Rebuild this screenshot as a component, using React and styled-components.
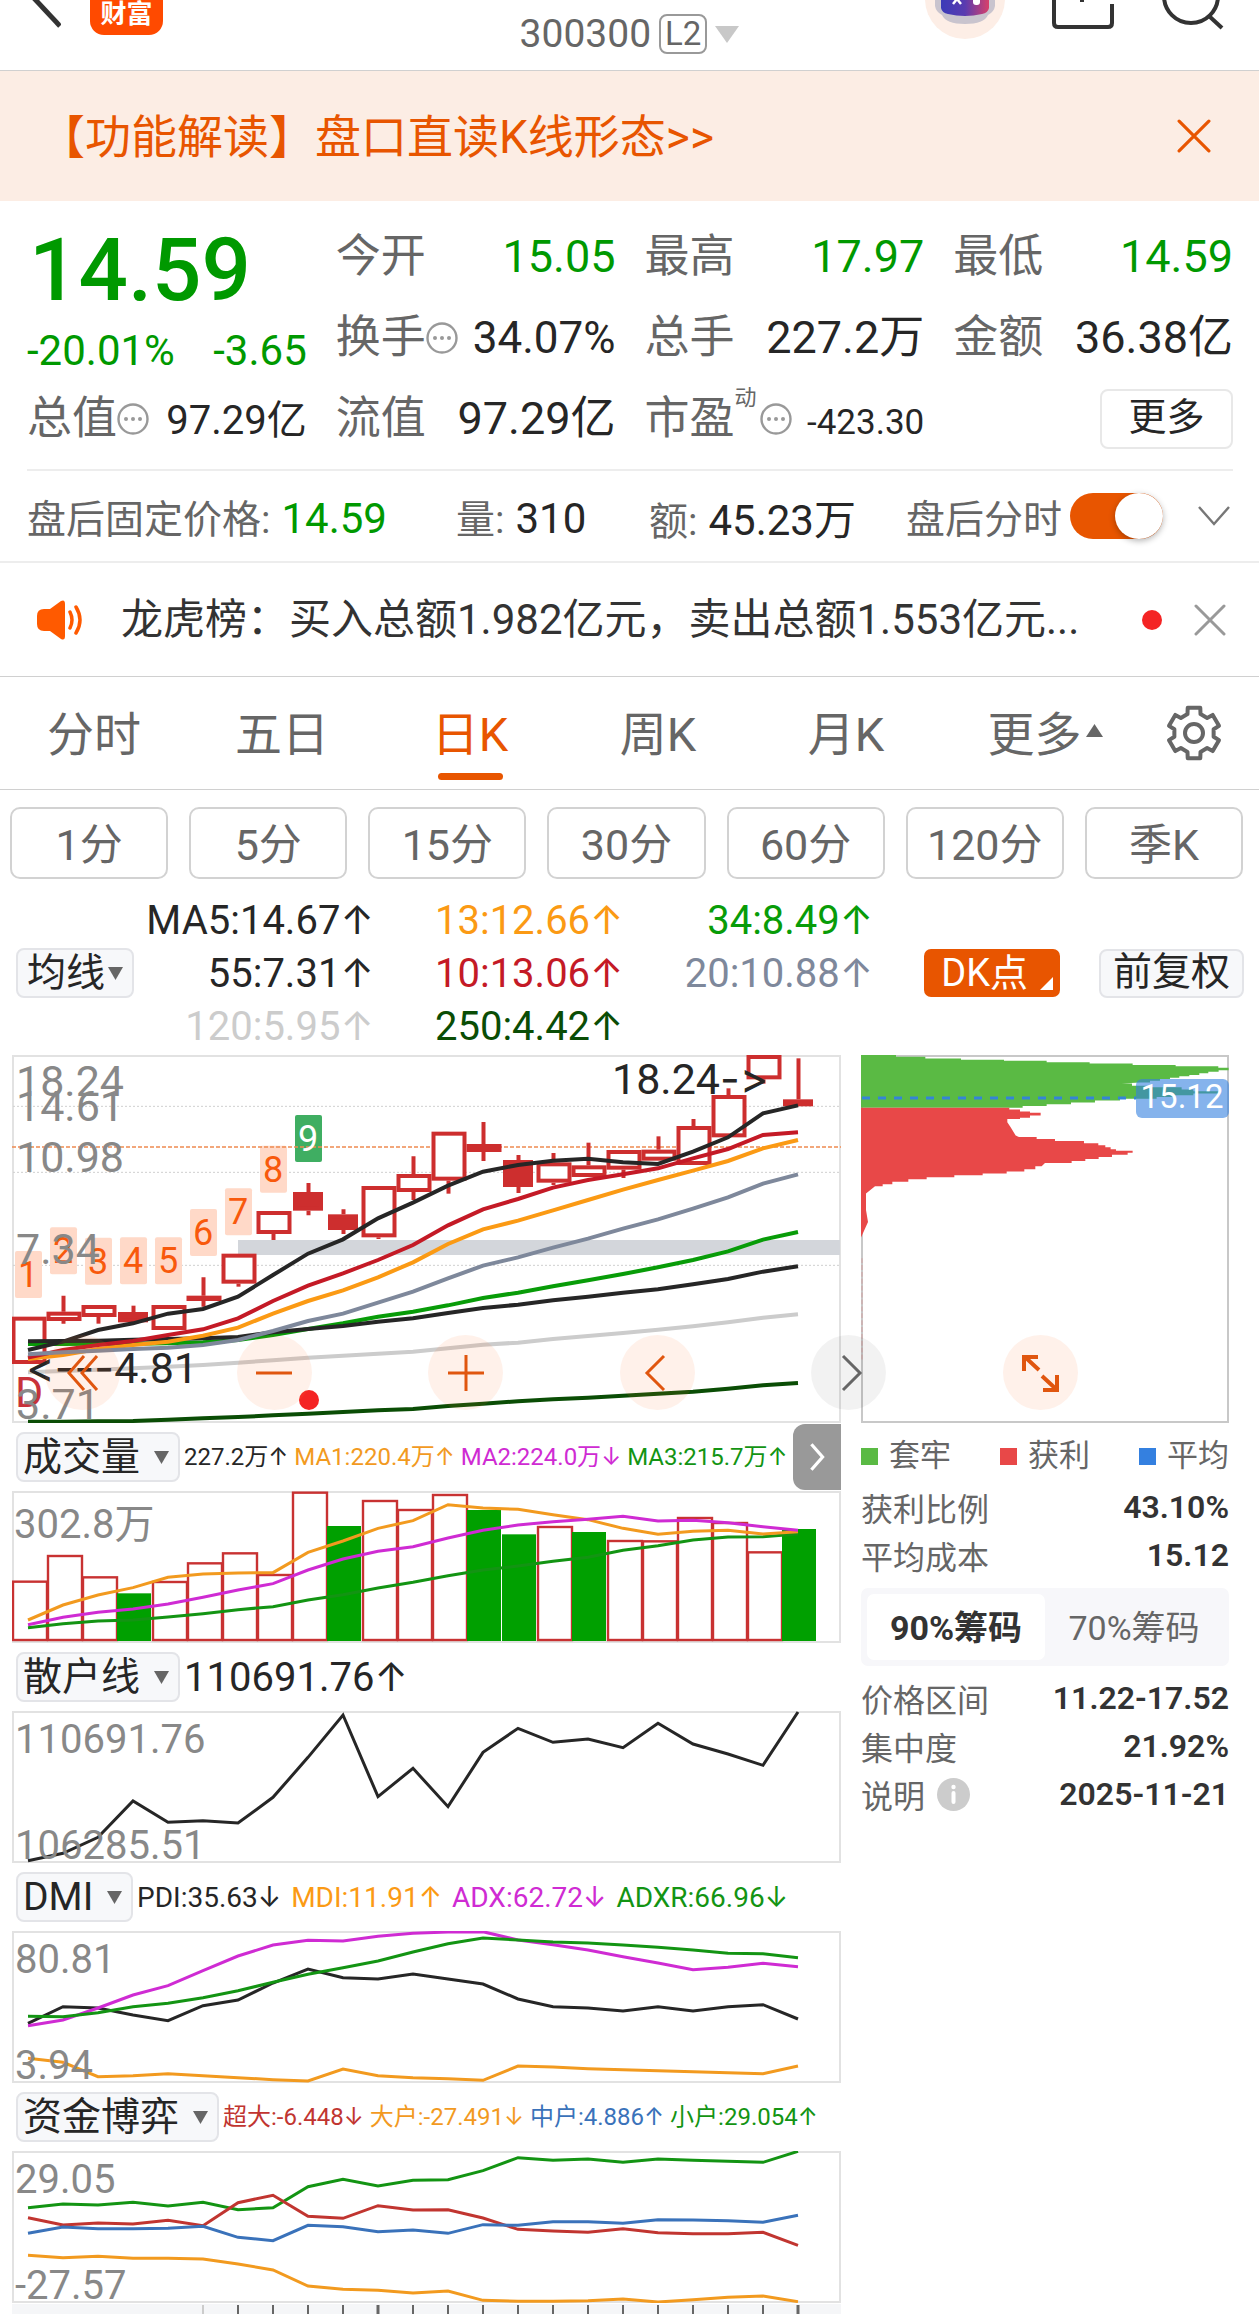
import { useState } from "react";
import styled, { createGlobalStyle } from "styled-components";

const GlobalStyle = createGlobalStyle`
  :root {
    --orange: #e85500;
    --green: #009900;
    --ink: #262626;
    --text: #333333;
    --muted: #666666;
  }
  * { box-sizing: border-box; }
  body {
    margin: 0;
    background: #fff;
    color: var(--text);
    font-family: Roboto, "Noto Sans CJK SC", sans-serif;
    overflow-x: hidden;
  }
  button, select, input {
    font-family: inherit;
    color: inherit;
    margin: 0;
  }
`;

const Page = styled.main`
  width: 100%;
`;
const IconButton = styled.button`
  display: flex;
  padding: 0;
  border: 0;
  background: none;
`;

/* ---------- header ---------- */
const Header = styled.header`
  display: grid;
  grid-template-columns: 1fr auto 1fr;
  height: 71px;
  border-bottom: 1px solid #d0d0d0;
`;
const HeaderLeft = styled.div`
  display: flex;
  gap: 29px;
  padding-left: 30px;
`;
const HeaderRight = styled.div`
  display: flex;
  justify-content: flex-end;
  gap: 46px;
  padding-right: 35px;
`;
const WealthLogo = styled.a`
  display: flex;
  align-items: flex-end;
  justify-content: center;
  width: 73px;
  height: 35px;
  padding-bottom: 6px;
  border-radius: 0 0 14px 14px;
  background: #ff4a00;
  color: #fff;
  font-size: 26px;
  font-weight: 700;
  line-height: 30px;
  text-decoration: none;
`;
const StockCode = styled.button`
  display: flex;
  align-items: center;
  gap: 8px;
  height: 68px;
  padding: 0;
  border: 0;
  background: none;
  color: var(--muted);
  font-size: 39px;
`;
const LevelTag = styled.span`
  padding: 0 4px;
  border: 2px solid #999;
  border-radius: 8px;
  font-size: 33px;
  line-height: 36px;
`;

/* ---------- banner ---------- */
const Banner = styled.section`
  display: flex;
  align-items: center;
  justify-content: space-between;
  height: 130px;
  padding: 0 48px 0 39px;
  background: #fcede4;
`;
const BannerLink = styled.a`
  padding-bottom: 6px;
  color: var(--orange);
  font-size: 46px;
  text-decoration: none;
`;

/* ---------- quote ---------- */
const Quote = styled.section`
  display: grid;
  grid-template-columns: repeat(4, 1fr);
  grid-auto-rows: 81px;
  column-gap: 29px;
  margin: 0 26px 0 27px;
  padding: 15px 0 10px;
  border-bottom: 2px solid #ededed;
`;
const PriceBlock = styled.div`
  grid-row: span 2;
  color: var(--green);
`;
const Price = styled.div`
  padding-left: 2px;
  font-size: 87px;
  font-weight: 500;
  line-height: 108px;
`;
const Change = styled.div`
  display: flex;
  justify-content: space-between;
  font-size: 42px;
  line-height: 54px;
`;
const Stat = styled.div`
  display: flex;
  align-items: baseline;
  min-width: 0;
  white-space: nowrap;
  > svg {
    align-self: center;
  }
`;
const StatLabel = styled.span`
  color: var(--muted);
  font-size: 45px;
  line-height: 81px;
`;
const StatValue = styled.span`
  margin-left: auto;
  color: ${({ up }) => (up ? "var(--green)" : "var(--ink)")};
  font-size: ${({ size }) => size || 45}px;
  line-height: 60px;
`;
const Sup = styled.sup`
  align-self: flex-start;
  margin-right: 3px;
  padding-top: 4px;
  color: var(--muted);
  font-size: 22px;
  line-height: 32px;
`;
const MoreButton = styled.button`
  align-self: center;
  justify-self: end;
  width: 133px;
  height: 60px;
  border: 2px solid #e8e8e8;
  border-radius: 8px;
  background: #fff;
  color: var(--ink);
  font-size: 38px;
  line-height: 48px;
  padding: 0 0 4px;
`;

/* ---------- after hours ---------- */
const AfterHours = styled.section`
  display: grid;
  grid-template-columns: 429fr 193fr 257fr 292fr 32fr;
  align-items: center;
  height: 92px;
  padding: 0 29px 0 27px;
  border-bottom: 2px solid #ededed;
  color: var(--muted);
  font-size: 39px;
  white-space: nowrap;
`;
const Figure = styled.span`
  margin-left: 11px;
  color: ${({ up }) => (up ? "var(--green)" : "var(--ink)")};
  font-size: 42px;
`;
const SwitchLabel = styled.label`
  display: flex;
  align-items: center;
  gap: 8px;
`;
const Switch = styled.input`
  appearance: none;
  display: flex;
  justify-content: ${({ checked }) => (checked ? "flex-end" : "flex-start")};
  width: 93px;
  height: 46px;
  border-radius: 23px;
  background: ${({ checked }) => (checked ? "var(--orange)" : "#ccc")};
  &::before {
    content: "";
    width: 48px;
    height: 46px;
    border-radius: 50%;
    background: #fff;
    box-shadow: 0 2px 6px rgba(0, 0, 0, 0.3);
  }
`;

/* ---------- notice ---------- */
const Notice = styled.section`
  display: flex;
  align-items: center;
  height: 114px;
  padding: 0 33px 0 36px;
  border-bottom: 1px solid #d0d0d0;
`;
const NoticeText = styled.a`
  flex: 1;
  margin-left: 35px;
  padding-bottom: 8px;
  color: var(--text);
  font-size: 42px;
  text-decoration: none;
  white-space: nowrap;
`;
const NoticeDot = styled.span`
  width: 20px;
  height: 20px;
  margin-right: 32px;
  border-radius: 50%;
  background: #f42424;
`;

/* ---------- tabs ---------- */
const Tabs = styled.nav`
  display: grid;
  grid-template-columns: repeat(5, 188fr) 210fr 109fr;
  height: 113px;
  border-bottom: 1px solid #d0d0d0;
`;
const Tab = styled.button`
  position: relative;
  display: flex;
  align-items: center;
  justify-content: center;
  gap: 4px;
  padding: 0 0 5px;
  border: 0;
  background: none;
  color: ${({ active }) => (active ? "var(--orange)" : "var(--muted)")};
  font-size: 47px;
  &::after {
    content: "";
    display: ${({ active }) => (active ? "block" : "none")};
    position: absolute;
    bottom: 9px;
    width: 65px;
    height: 7px;
    border-radius: 4px;
    background: var(--orange);
  }
`;
const GearButton = styled(IconButton)`
  align-items: center;
  padding-left: 15px;
`;
const Periods = styled.div`
  display: flex;
  gap: 21px;
  padding: 17px 16px 0 10px;
`;
const PeriodButton = styled.button`
  flex: 1 1 0;
  height: 72px;
  padding: 0 0 5px;
  border: 2px solid #d2d2d2;
  border-radius: 10px;
  background: #fff;
  color: var(--muted);
  font-size: 43px;
  white-space: nowrap;
`;

/* ---------- moving averages ---------- */
const Averages = styled.section`
  display: flex;
  align-items: center;
  height: 176px;
  padding: 15px 15px 3px 16px;
`;
const AverageGrid = styled.div`
  flex: 1;
  display: grid;
  grid-template-columns: 240fr 250fr 250fr;
  justify-items: end;
  margin-right: 51px;
`;
const AverageItem = styled.span`
  color: ${({ color }) => color};
  font-size: 40px;
  line-height: 52px;
  white-space: nowrap;
`;
const ArrowText = styled.span`
  font-family: Inter, sans-serif;
`;
const Picker = styled.label`
  position: relative;
  display: inline-flex;
  flex: none;
  height: 50px;
  border: 2px solid #e3e4e8;
  border-radius: 8px;
  background: #f7f8fa;
  color: var(--ink);
  > svg {
    position: absolute;
    right: 9px;
    top: 17px;
    pointer-events: none;
  }
`;
const PickerSelect = styled.select`
  appearance: none;
  padding: 0 ${({ tight }) => (tight ? "26px 2px 9px" : "37px 2px 5px")};
  border: 0;
  background: none;
  font-size: 39px;
  line-height: 46px;
`;
const DkButton = styled.button`
  display: flex;
  align-items: center;
  gap: 12px;
  height: 48px;
  margin-right: 39px;
  padding: 0 7px 0 17px;
  border: 0;
  border-radius: 7px;
  background: var(--orange);
  color: #fff;
  font-size: 38px;
  line-height: 46px;
  > svg {
    align-self: flex-end;
    margin-bottom: 7px;
  }
`;
const AdjustButton = styled.button`
  height: 49px;
  padding: 0 12px 2px;
  border: 2px solid #e3e4e8;
  border-radius: 8px;
  background: #f7f8fa;
  color: var(--ink);
  font-size: 39px;
  line-height: 43px;
`;

/* ---------- charts ---------- */
const ChartArea = styled.section`
  display: grid;
  grid-template-columns: 829fr 368fr;
  align-items: start;
  gap: 20px;
  padding: 0 30px 0 12px;
`;
const Column = styled.div`
  min-width: 0;
`;
const ChartBox = styled.div`
  position: relative;
`;
const ChartSvg = styled.svg`
  display: block;
  width: 100%;
  height: auto;
  font-size: ${({ $label }) => $label || 40}px;
`;
const Pointer = styled.tspan`
  font-family: Inter, sans-serif;
  font-feature-settings: "calt" 0, "liga" 0;
`;
const ChartTools = styled.div`
  position: absolute;
  top: 280px;
  left: 33px;
  right: -45px;
  z-index: 1;
  display: flex;
  justify-content: space-between;
`;
const RoundButton = styled.button`
  display: flex;
  align-items: center;
  justify-content: center;
  width: 75px;
  height: 75px;
  padding: 0;
  border: 0;
  border-radius: 50%;
  background: ${({ plain }) => (plain ? "rgba(0, 0, 0, 0.05)" : "rgba(255, 115, 50, 0.1)")};
  color: ${({ plain }) => (plain ? "#666" : "#e0560f")};
`;
const ExpandHolder = styled.div`
  position: absolute;
  top: 280px;
  left: 0;
  right: 0;
  display: flex;
  justify-content: center;
  padding-right: 10px;
`;
const IndicatorBar = styled.div`
  display: flex;
  align-items: center;
  gap: 4px;
  height: 68px;
  padding-left: 4px;
`;
const Readings = styled.div`
  display: flex;
  flex: 1;
  gap: ${({ gap }) => gap || 10}px;
  min-width: 0;
  font-size: ${({ size }) => size}px;
  line-height: 36px;
  white-space: nowrap;
`;
const Reading = styled.span`
  color: ${({ color }) => color};
`;
const NextButton = styled.button`
  display: flex;
  flex: none;
  align-items: center;
  justify-content: center;
  width: 48px;
  height: 66px;
  padding: 0;
  border: 0;
  border-radius: 12px 0 0 12px;
  background: #999;
  color: #fff;
`;

/* ---------- chips ---------- */
const Legend = styled.div`
  display: flex;
  justify-content: space-between;
  padding: 9px 0 3px;
  color: var(--muted);
  font-size: 31px;
  line-height: 48px;
`;
const LegendItem = styled.span`
  display: flex;
  align-items: center;
  gap: 11px;
  &::before {
    content: "";
    width: 17px;
    height: 17px;
    background: ${({ color }) => color};
  }
`;
const Facts = styled.dl`
  margin: 0;
`;
const Fact = styled.div`
  display: flex;
  align-items: center;
  justify-content: space-between;
  height: 48px;
  color: var(--muted);
  font-size: 32px;
  dt {
    display: flex;
    align-items: center;
    gap: 12px;
  }
  dd {
    margin: 0;
    color: var(--text);
    font-weight: 600;
  }
`;
const Segments = styled.div`
  display: grid;
  grid-template-columns: 1fr 1fr;
  height: 78px;
  margin: 9px 0 8px;
  padding: 6px;
  border-radius: 7px;
  background: #f7f7fa;
`;
const Segment = styled.button`
  padding: 0 0 3px;
  border: 0;
  border-radius: 7px;
  background: ${({ active }) => (active ? "#fff" : "transparent")};
  color: ${({ active }) => (active ? "var(--text)" : "var(--muted)")};
  font-size: 34px;
  font-weight: ${({ active }) => (active ? 700 : 400)};
  white-space: nowrap;
`;

/* series values are in thirds of a pixel, measured down from `base` */
const STEP = 35;
const px = (i) => 16 + i * STEP;
const py = (v, base) => v / 3 - base;

const candles = [
  ["o", 815, 957, 815, 957], ["o", 800, 828, 752, 836], ["o", 780, 816, 780, 836],
  ["s", 801, 832, 782, 832], ["o", 780, 855, 780, 855], ["o", 752, 768, 697, 785],
  ["o", 626, 716, 626, 725], ["o", 498, 567, 498, 585], ["s", 441, 497, 414, 511],
  ["s", 508, 555, 493, 567], ["o", 423, 577, 423, 582], ["o", 387, 441, 334, 465],
  ["o", 260, 407, 260, 446], ["o", 297, 321, 231, 348], ["s", 345, 426, 330, 444],
  ["o", 352, 413, 324, 420], ["o", 361, 396, 293, 396], ["o", 315, 374, 315, 399],
  ["o", 314, 347, 274, 347], ["o", 243, 360, 222, 360], ["o", 150, 277, 130, 277],
  ["o", 30, 103, 30, 116], ["s", 163, 184, 40, 184],
];
const averageLines = [
  ["#cccccc", [982, 978, 974, 970, 965, 960, 953, 946, 938, 932, 926, 920, 910, 899, 893, 882, 873, 864, 854, 844, 832, 818, 808]],
  ["#0a4d05", [1130, 1130, 1129, 1128, 1124, 1120, 1116, 1111, 1106, 1101, 1096, 1092, 1083, 1076, 1069, 1063, 1058, 1052, 1046, 1040, 1031, 1021, 1014]],
  ["#089c08", [897, 897, 896, 896, 895, 892, 885, 870, 852, 835, 815, 800, 781, 759, 743, 724, 706, 687, 667, 645, 619, 584, 561]],
  ["#262626", [889, 888, 887, 884, 882, 880, 876, 862, 852, 843, 830, 820, 804, 789, 779, 766, 755, 743, 733, 718, 702, 680, 664]],
  ["#262626", [915, 890, 855, 835, 806, 792, 755, 690, 626, 583, 520, 473, 422, 380, 360, 347, 341, 352, 357, 320, 277, 205, 181]],
  ["#fb9a14", [942, 930, 912, 900, 890, 872, 848, 806, 768, 736, 697, 652, 597, 553, 527, 496, 465, 434, 405, 377, 348, 310, 285]],
  ["#c41a26", [938, 915, 900, 888, 870, 853, 820, 768, 722, 685, 645, 600, 541, 493, 462, 428, 405, 388, 370, 340, 312, 270, 262]],
  ["#7e889b", [928, 922, 917, 912, 908, 900, 885, 858, 828, 806, 773, 740, 700, 662, 637, 608, 581, 551, 523, 491, 457, 416, 388]],
];
const countTags = [618, 547, 578, 577, 577, 492, 430, 302, 210];
const volumes = [482, 405, 469, 520, 483, 427, 397, 462, 215, 318, 240, 267, 222, 270, 343, 318, 336, 360, 361, 291, 306, 394, 327];
const fallingDays = [3, 9, 13, 14, 16, 22];
const volumeLines = [
  ["#139413", [623, 611, 603, 600, 591, 581, 569, 560, 540, 524, 504, 487, 467, 450, 438, 424, 412, 391, 377, 360, 351, 350, 342]],
  ["#f29a1f", [600, 555, 525, 503, 472, 462, 459, 458, 397, 363, 325, 302, 254, 264, 268, 284, 299, 325, 343, 334, 331, 342, 335]],
  ["#cf2bd3", [614, 592, 577, 567, 552, 532, 510, 491, 450, 417, 394, 380, 354, 331, 315, 305, 298, 289, 303, 301, 308, 320, 331]],
];
const retailLine = [
  ["#262626", [482, 460, 412, 303, 367, 362, 369, 292, 172, 45, 290, 205, 320, 157, 85, 127, 117, 143, 70, 132, 162, 196, 36]],
];
const dmiLines = [
  ["#262626", [277, 227, 231, 252, 269, 224, 207, 156, 114, 140, 144, 129, 144, 159, 204, 227, 231, 240, 227, 240, 227, 221, 264]],
  ["#cf2bd3", [284, 267, 231, 192, 164, 119, 75, 42, 28, 30, 16, 7, 3, 2, 27, 41, 57, 77, 96, 116, 109, 97, 107]],
  ["#139413", [256, 257, 245, 227, 217, 200, 179, 154, 130, 110, 90, 63, 38, 21, 27, 33, 36, 42, 49, 57, 67, 68, 80]],
  ["#f29a1f", [382, 394, 437, 434, 428, 434, 440, 446, 450, 414, 434, 440, 443, 448, 405, 408, 413, 416, 419, 422, 425, 428, 405]],
];
const moneyLines = [
  ["#139413", [653, 642, 645, 637, 648, 637, 659, 653, 590, 568, 588, 571, 569, 542, 503, 511, 507, 517, 507, 511, 514, 517, 484]],
  ["#c13530", [683, 705, 699, 702, 691, 707, 638, 616, 679, 685, 647, 660, 659, 684, 718, 723, 727, 716, 728, 731, 731, 727, 766]],
  ["#3a72ba", [730, 711, 716, 716, 715, 709, 742, 752, 706, 710, 725, 720, 730, 704, 706, 695, 695, 700, 689, 690, 692, 697, 676]],
  ["#f29a1f", [796, 803, 799, 805, 805, 807, 822, 840, 888, 898, 901, 909, 903, 931, 934, 934, 932, 927, 936, 929, 922, 918, 935]],
];
const averages = [
  ["MA5:14.67", "#262626"], ["13:12.66", "#fb9a14"], ["34:8.49", "#089c08"],
  ["55:7.31", "#262626"], ["10:13.06", "#c41a26"], ["20:10.88", "#7e889b"],
  ["120:5.95", "#cccccc"], ["250:4.42", "#0a4d05"],
];

const CloseMark = ({ size, color }) => (
  <svg width={size} height={size} viewBox="0 0 32 32" stroke={color} strokeWidth="3" strokeLinecap="round">
    <path d="M2 2 30 30M30 2 2 30" />
  </svg>
);
const DownMark = ({ width = 15, height = 13, color = "#666" }) => (
  <svg width={width} height={height} viewBox="0 0 15 13" preserveAspectRatio="none">
    <path d="M0 0H15L7.5 13Z" fill={color} />
  </svg>
);
const HintMark = () => (
  <svg width="32" height="32" viewBox="0 0 32 32" fill="none">
    <circle cx="16" cy="16" r="14.5" stroke="#999" strokeWidth="2.4" />
    <g fill="#999"><circle cx="9" cy="16" r="2" /><circle cx="16" cy="16" r="2" /><circle cx="23" cy="16" r="2" /></g>
  </svg>
);
const gearPoints = Array.from({ length: 6 }, (_, k) => {
  const at = (deg, r) => {
    const a = ((k * 60 - 90 + deg) * Math.PI) / 180;
    return `${29 + r * Math.cos(a)},${29 + r * Math.sin(a)}`;
  };
  return [at(-14, 26), at(14, 26), at(19, 20), at(41, 20)].join(" ");
}).join(" ");

const Stroke = ({ d, size = 40, width = 3 }) => (
  <svg width={size} height={size} viewBox="0 0 40 40" fill="none" stroke="currentColor" strokeWidth={width}>
    <path d={d} />
  </svg>
);

const Lines = ({ data, base, width = 3 }) =>
  data.map(([color, ys], n) => (
    <polyline
      key={n}
      fill="none"
      stroke={color}
      strokeWidth={width}
      points={ys.map((v, i) => `${px(i)},${py(v, base)}`).join(" ")}
    />
  ));

const Frame = ({ height }) => (
  <rect x="1" y="1" width="827" height={height - 2} fill="none" stroke="#e2e2e2" strokeWidth="2" />
);

const Value = ({ children, down }) => (
  <>
    {children}
    <ArrowText>{down ? "↓" : "↑"}</ArrowText>
  </>
);

const IndicatorPicker = ({ name, tight }) => (
  <Picker>
    <PickerSelect aria-label={name} tight={tight ? 1 : undefined} defaultValue={name}>
      <option>{name}</option>
    </PickerSelect>
    <DownMark />
  </Picker>
);

const KLineChart = () => (
  <ChartSvg viewBox="0 0 829 368" $label={43}>
    <Frame height={368} />
    {[184, 382, 661].map((v) => (
      <line key={v} x1="1" x2="828" y1={py(v, 10)} y2={py(v, 10)} stroke="#cfcfcf" strokeDasharray="2 2" />
    ))}
    {countTags.map((v, i) => (
      <rect key={v + i} x={px(i) - 13} y={py(v, 10)} width="27" height="47" rx="2" fill={i === 8 ? "#3fae62" : "#ffd9c8"} />
    ))}
    <line x1="0" x2="829" y1="92" y2="92" stroke="#ee8a50" strokeWidth="1.5" strokeDasharray="4 2" />
    <rect x="226" y="185" width="602" height="15" fill="#d3d6db" />
    {candles.map(([kind, top, bottom, high, low], i) => {
      const x = px(i);
      const solid = kind === "s";
      return (
        <g key={i} stroke="#cd2e2e" strokeWidth="4" fill={solid ? "#cd2e2e" : "#fff"}>
          <path d={`M${x + 0.5} ${py(high, 10)}V${py(top, 10)}M${x + 0.5} ${py(bottom, 10)}V${py(low, 10)}`} />
          <rect
            x={x - (solid ? 13 : 14.5)}
            y={py(top, 10) + 2}
            width={solid ? 26 : 31}
            height={Math.max((bottom - top) / 3 - 4, 1)}
          />
        </g>
      );
    })}
    <Lines data={averageLines} base={10} width={4} />
    <g fontSize="36" textAnchor="middle">
      {countTags.map((v, i) => (
        <text key={v + i} x={px(i)} y={py(v, 10) + 36} fill={i === 8 ? "#fff" : "#f8590c"}>{i + 1}</text>
      ))}
    </g>
    <text x="3" y="352" fill="#c8323a">D</text>
    <g fill="#888">
      <text x="4" y="41">18.24</text>
      <text x="4" y="66">14.61</text>
      <text x="4" y="117">10.98</text>
      <text x="4" y="209">7.34</text>
      <text x="4" y="364">3.71</text>
    </g>
    <g fill="#262626">
      <text x="186" y="328" textAnchor="end"><Pointer>&lt;---</Pointer>4.81</text>
      <text x="600" y="39">18.24<Pointer>-&gt;</Pointer></text>
    </g>
    <circle cx="297" cy="345" r="10" fill="#f42424" />
  </ChartSvg>
);

const VolumeChart = () => (
  <ChartSvg viewBox="0 0 829 152">
    <Frame height={152} />
    {volumes.map((v, i) => {
      const y = py(v, 71);
      return fallingDays.includes(i) ? (
        <rect key={i} x={px(i) - 16} y={y} width="34" height={150 - y} fill="#00a000" />
      ) : (
        <rect key={i} x={px(i) - 15} y={y + 1} width="34" height={148 - y} fill="#fff" stroke="#c83232" strokeWidth="2.4" />
      );
    })}
    <Lines data={volumeLines} base={71} />
    <text x="2" y="47" fill="#888">302.8万</text>
  </ChartSvg>
);

const LineChart = ({ data, base, high, low }) => (
  <ChartSvg viewBox="0 0 829 152">
    <Frame height={152} />
    <Lines data={data} base={base} />
    <g fill="#888">
      <text x="3" y="42">{high}</text>
      <text x="3" y="148">{low}</text>
    </g>
  </ChartSvg>
);

const TimeAxis = () => (
  <ChartSvg viewBox="0 0 829 12">
    <rect y="1" width="829" height="11" fill="#f5f6f8" />
    {Array.from({ length: 18 }, (_, n) => n + 5).map((i) => (
      <line
        key={i}
        x1={px(i)}
        x2={px(i)}
        y1="2"
        y2="12"
        stroke={i === 5 ? "#ccc" : "#666"}
        strokeWidth={i === 10 || i === 22 ? 3 : 2}
      />
    ))}
  </ChartSvg>
);

const ChipChart = () => (
  <ChartSvg viewBox="0 0 368 368">
    <rect x="1" y="1" width="366" height="366" fill="none" stroke="#c8c8c8" strokeWidth="2" />
    <g transform="translate(-21 -155) scale(0.3333 0.3444)">
      <path fill="#5aba44" d="M63 450H168V455H256V460H363V464H492V467H620V471H749V475H878V479H1007V483H1135V487H1166V494H1136V499H1105V503H1078V508H1048V512H1018V516H990V520H960V525H930V530H900L845 533H876V539H920V544H1025V550H1060V555H1135V562H1060V567H1000V572H950V577H840V582H765V588H693V593H620V598H548V603H63Z" />
      <path fill="#e84848" d="M63 603H508V608H540V614H570V618H602V626H570V632H540V636H502V645L512 660L527 684L537 688H590V694H645V700H732V706H775V712H796V718H812V724H828V728H878V734H863V740H816V746H776V752H736V758H695V764H615L605 773H586V782H553V788H500V794H428V799H343V805H260V811H205V818H157V825H128V831H105L78 852V900L84 935L63 980Z" />
      <path stroke="#e84848" strokeOpacity="0.3" strokeWidth="3" strokeDasharray="14 6" d="M66 1040V1340" />
    </g>
    <line x1="1" x2="275" y1="43" y2="43" stroke="#3584d8" strokeWidth="3" strokeDasharray="8 8" />
    <rect x="275" y="24" width="93" height="39" rx="6" fill="#3480e0" fillOpacity="0.6" />
    <text x="321" y="53" fontSize="33" fill="#fff" textAnchor="middle">15.12</text>
  </ChartSvg>
);

const App = () => {
  const [afterOpen, setAfterOpen] = useState(true);
  const [tab, setTab] = useState("日K");
  const [chips, setChips] = useState("90%筹码");

  return (
    <Page>
      <GlobalStyle />
      <Header>
        <HeaderLeft>
          <IconButton aria-label="返回">
            <svg width="31" height="30" viewBox="0 0 31 30" stroke="#333" strokeWidth="5">
              <path d="M1-5 30 26" />
            </svg>
          </IconButton>
          <WealthLogo href="#">财富</WealthLogo>
        </HeaderLeft>
        <StockCode>
          300300<LevelTag>L2</LevelTag>
          <DownMark width={24} height={17} color="#c8c8c8" />
        </StockCode>
        <HeaderRight>
          <IconButton aria-label="智能助手">
            <svg width="82" height="40" viewBox="0 0 82 40">
              <defs>
                <linearGradient id="face" x1="0" x2="1">
                  <stop offset="0" stopColor="#3b3bb8" />
                  <stop offset="0.5" stopColor="#5a3bb0" />
                  <stop offset="1" stopColor="#d8406a" />
                </linearGradient>
              </defs>
              <circle cx="41" cy="-1" r="40" fill="#fdeee6" />
              <path d="M11-2H71V6Q70 12 64 15Q60 24 41 24Q22 24 18 15Q12 12 11 6Z" fill="#c9c4ce" />
              <path d="M17-2H65V8Q64 13 58 14Q41 18 24 14Q18 13 17 8Z" fill="url(#face)" />
              <path d="M29 4 33-1 37 4" fill="none" stroke="#fff" strokeWidth="2.5" />
              <rect x="49" y="-4" width="7" height="9" rx="3" fill="#fff" />
            </svg>
          </IconButton>
          <IconButton aria-label="分享">
            <svg width="62" height="30" viewBox="0 0 62 30" fill="none" stroke="#333" strokeWidth="4">
              <path d="M2-4V23Q2 27 6 27H56Q60 27 60 23V4M30-4V2" />
            </svg>
          </IconButton>
          <IconButton aria-label="搜索">
            <svg width="64" height="30" viewBox="0 0 64 30" fill="none" stroke="#333" strokeWidth="4">
              <circle cx="31" cy="-4" r="27" />
              <path d="M49 16 62 28" />
            </svg>
          </IconButton>
        </HeaderRight>
      </Header>

      <Banner>
        <BannerLink href="#">【功能解读】盘口直读K线形态&gt;&gt;</BannerLink>
        <IconButton aria-label="关闭"><CloseMark size={34} color="#e85500" /></IconButton>
      </Banner>

      <Quote>
        <PriceBlock>
          <Price>14.59</Price>
          <Change><span>-20.01%</span><span>-3.65</span></Change>
        </PriceBlock>
        <Stat><StatLabel>今开</StatLabel><StatValue up>15.05</StatValue></Stat>
        <Stat><StatLabel>最高</StatLabel><StatValue up>17.97</StatValue></Stat>
        <Stat><StatLabel>最低</StatLabel><StatValue up>14.59</StatValue></Stat>
        <Stat><StatLabel>换手</StatLabel><HintMark /><StatValue size={44}>34.07%</StatValue></Stat>
        <Stat><StatLabel>总手</StatLabel><StatValue>227.2万</StatValue></Stat>
        <Stat><StatLabel>金额</StatLabel><StatValue>36.38亿</StatValue></Stat>
        <Stat><StatLabel>总值</StatLabel><HintMark /><StatValue size={40}>97.29亿</StatValue></Stat>
        <Stat><StatLabel>流值</StatLabel><StatValue>97.29亿</StatValue></Stat>
        <Stat><StatLabel>市盈</StatLabel><Sup>动</Sup><HintMark /><StatValue size={35}>-423.30</StatValue></Stat>
        <MoreButton>更多</MoreButton>
      </Quote>

      <AfterHours>
        <span>盘后固定价格:<Figure up>14.59</Figure></span>
        <span>量:<Figure>310</Figure></span>
        <span>额:<Figure>45.23万</Figure></span>
        <SwitchLabel>
          盘后分时
          <Switch type="checkbox" checked={afterOpen} onChange={() => setAfterOpen(!afterOpen)} />
        </SwitchLabel>
        <IconButton aria-label="展开">
          <svg width="32" height="20" viewBox="0 0 32 20" fill="none" stroke="#777" strokeWidth="2.4">
            <path d="M1 1 16 18 31 1" />
          </svg>
        </IconButton>
      </AfterHours>

      <Notice>
        <svg width="50" height="40" viewBox="0 0 50 40">
          <path d="M8 9H14L25 1Q29-1 29 4V36Q29 41 25 39L14 31H8Q1 31 1 24V16Q1 9 8 9Z" fill="#ff5a00" />
          <path d="M34 12Q38 20 34 28M40 7Q48 20 40 33" fill="none" stroke="#ff5a00" strokeWidth="3.5" strokeLinecap="round" />
        </svg>
        <NoticeText href="#">龙虎榜：买入总额1.982亿元，卖出总额1.553亿元...</NoticeText>
        <NoticeDot />
        <IconButton aria-label="关闭"><CloseMark size={32} color="#999" /></IconButton>
      </Notice>

      <Tabs>
        {["分时", "五日", "日K", "周K", "月K"].map((name) => (
          <Tab key={name} active={tab === name ? 1 : undefined} onClick={() => setTab(name)}>{name}</Tab>
        ))}
        <Tab>
          更多
          <svg width="17" height="13" viewBox="0 0 17 13"><path d="M0 13H17L8.5 0Z" fill="#666" /></svg>
        </Tab>
        <GearButton aria-label="设置">
          <svg width="58" height="58" viewBox="0 0 58 58" fill="none" stroke="#666" strokeWidth="4" strokeLinejoin="round">
            <polygon points={gearPoints} />
            <circle cx="29" cy="29" r="9" />
          </svg>
        </GearButton>
      </Tabs>

      <Periods>
        {["1分", "5分", "15分", "30分", "60分", "120分", "季K"].map((name) => (
          <PeriodButton key={name}>{name}</PeriodButton>
        ))}
      </Periods>

      <Averages>
        <IndicatorPicker name="均线" tight />
        <AverageGrid>
          {averages.map(([text, color]) => (
            <AverageItem key={text} color={color}><Value>{text}</Value></AverageItem>
          ))}
        </AverageGrid>
        <DkButton>
          DK点
          <svg width="13" height="13" viewBox="0 0 13 13"><path d="M13 0V13H0Z" fill="#fff" /></svg>
        </DkButton>
        <AdjustButton>前复权</AdjustButton>
      </Averages>

      <ChartArea>
        <Column>
          <ChartBox>
            <KLineChart />
            <ChartTools>
              <RoundButton aria-label="最左"><Stroke d="M21 3 6 20 21 37M34 3 19 20 34 37" /></RoundButton>
              <RoundButton aria-label="缩小"><Stroke d="M2 20H38" /></RoundButton>
              <RoundButton aria-label="放大"><Stroke d="M2 20H38M20 2V38" /></RoundButton>
              <RoundButton aria-label="左移"><Stroke d="M27 3 10 20 27 37" /></RoundButton>
              <RoundButton aria-label="右移" plain={1}><Stroke d="M14 3 31 20 14 37" /></RoundButton>
            </ChartTools>
          </ChartBox>

          <IndicatorBar>
            <IndicatorPicker name="成交量" />
            <Readings size={24} gap={6}>
              <Reading color="#262626"><Value>227.2万</Value></Reading>
              <Reading color="#f29a1f"><Value>MA1:220.4万</Value></Reading>
              <Reading color="#cf2bd3"><Value down>MA2:224.0万</Value></Reading>
              <Reading color="#139413"><Value>MA3:215.7万</Value></Reading>
            </Readings>
            <NextButton aria-label="下一页"><Stroke size={32} width={4} d="M13 4 27 20 13 36" /></NextButton>
          </IndicatorBar>
          <VolumeChart />

          <IndicatorBar>
            <IndicatorPicker name="散户线" />
            <AverageItem color="#262626"><Value>110691.76</Value></AverageItem>
          </IndicatorBar>
          <LineChart data={retailLine} base={11} high="110691.76" low="106285.51" />

          <IndicatorBar>
            <IndicatorPicker name="DMI" />
            <Readings size={28}>
              <Reading color="#262626"><Value down>PDI:35.63</Value></Reading>
              <Reading color="#fb9a14"><Value>MDI:11.91</Value></Reading>
              <Reading color="#cf2bd3"><Value down>ADX:62.72</Value></Reading>
              <Reading color="#139413"><Value down>ADXR:66.96</Value></Reading>
            </Readings>
          </IndicatorBar>
          <LineChart data={dmiLines} base={0} high="80.81" low="3.94" />

          <IndicatorBar>
            <IndicatorPicker name="资金博弈" />
            <Readings size={24} gap={6}>
              <Reading color="#c13530"><Value down>超大:-6.448</Value></Reading>
              <Reading color="#f29a1f"><Value down>大户:-27.491</Value></Reading>
              <Reading color="#3a72ba"><Value>中户:4.886</Value></Reading>
              <Reading color="#139413"><Value>小户:29.054</Value></Reading>
            </Readings>
          </IndicatorBar>
          <LineChart data={moneyLines} base={161} high="29.05" low="-27.57" />
          <TimeAxis />
        </Column>

        <Column>
          <ChartBox>
            <ChipChart />
            <ExpandHolder>
              <RoundButton aria-label="全屏"><Stroke width={4} d="M19 17 5 4M4 18V4H18M22 23 36 36M23 37H37V22" /></RoundButton>
            </ExpandHolder>
          </ChartBox>
          <Legend>
            <LegendItem color="#5aba44">套牢</LegendItem>
            <LegendItem color="#e84848">获利</LegendItem>
            <LegendItem color="#3480e0">平均</LegendItem>
          </Legend>
          <Facts>
            <Fact><dt>获利比例</dt><dd>43.10%</dd></Fact>
            <Fact><dt>平均成本</dt><dd>15.12</dd></Fact>
          </Facts>
          <Segments>
            {["90%筹码", "70%筹码"].map((name) => (
              <Segment key={name} active={chips === name ? 1 : undefined} onClick={() => setChips(name)}>{name}</Segment>
            ))}
          </Segments>
          <Facts>
            <Fact><dt>价格区间</dt><dd>11.22-17.52</dd></Fact>
            <Fact><dt>集中度</dt><dd>21.92%</dd></Fact>
            <Fact>
              <dt>
                说明
                <svg width="33" height="33" viewBox="0 0 33 33">
                  <circle cx="16.5" cy="16.5" r="16.5" fill="#ccc" />
                  <circle cx="16.5" cy="9" r="2.2" fill="#fff" />
                  <path d="M16.5 15V24" stroke="#fff" strokeWidth="4" strokeLinecap="round" />
                </svg>
              </dt>
              <dd>2025-11-21</dd>
            </Fact>
          </Facts>
        </Column>
      </ChartArea>
    </Page>
  );
};

export default App;
